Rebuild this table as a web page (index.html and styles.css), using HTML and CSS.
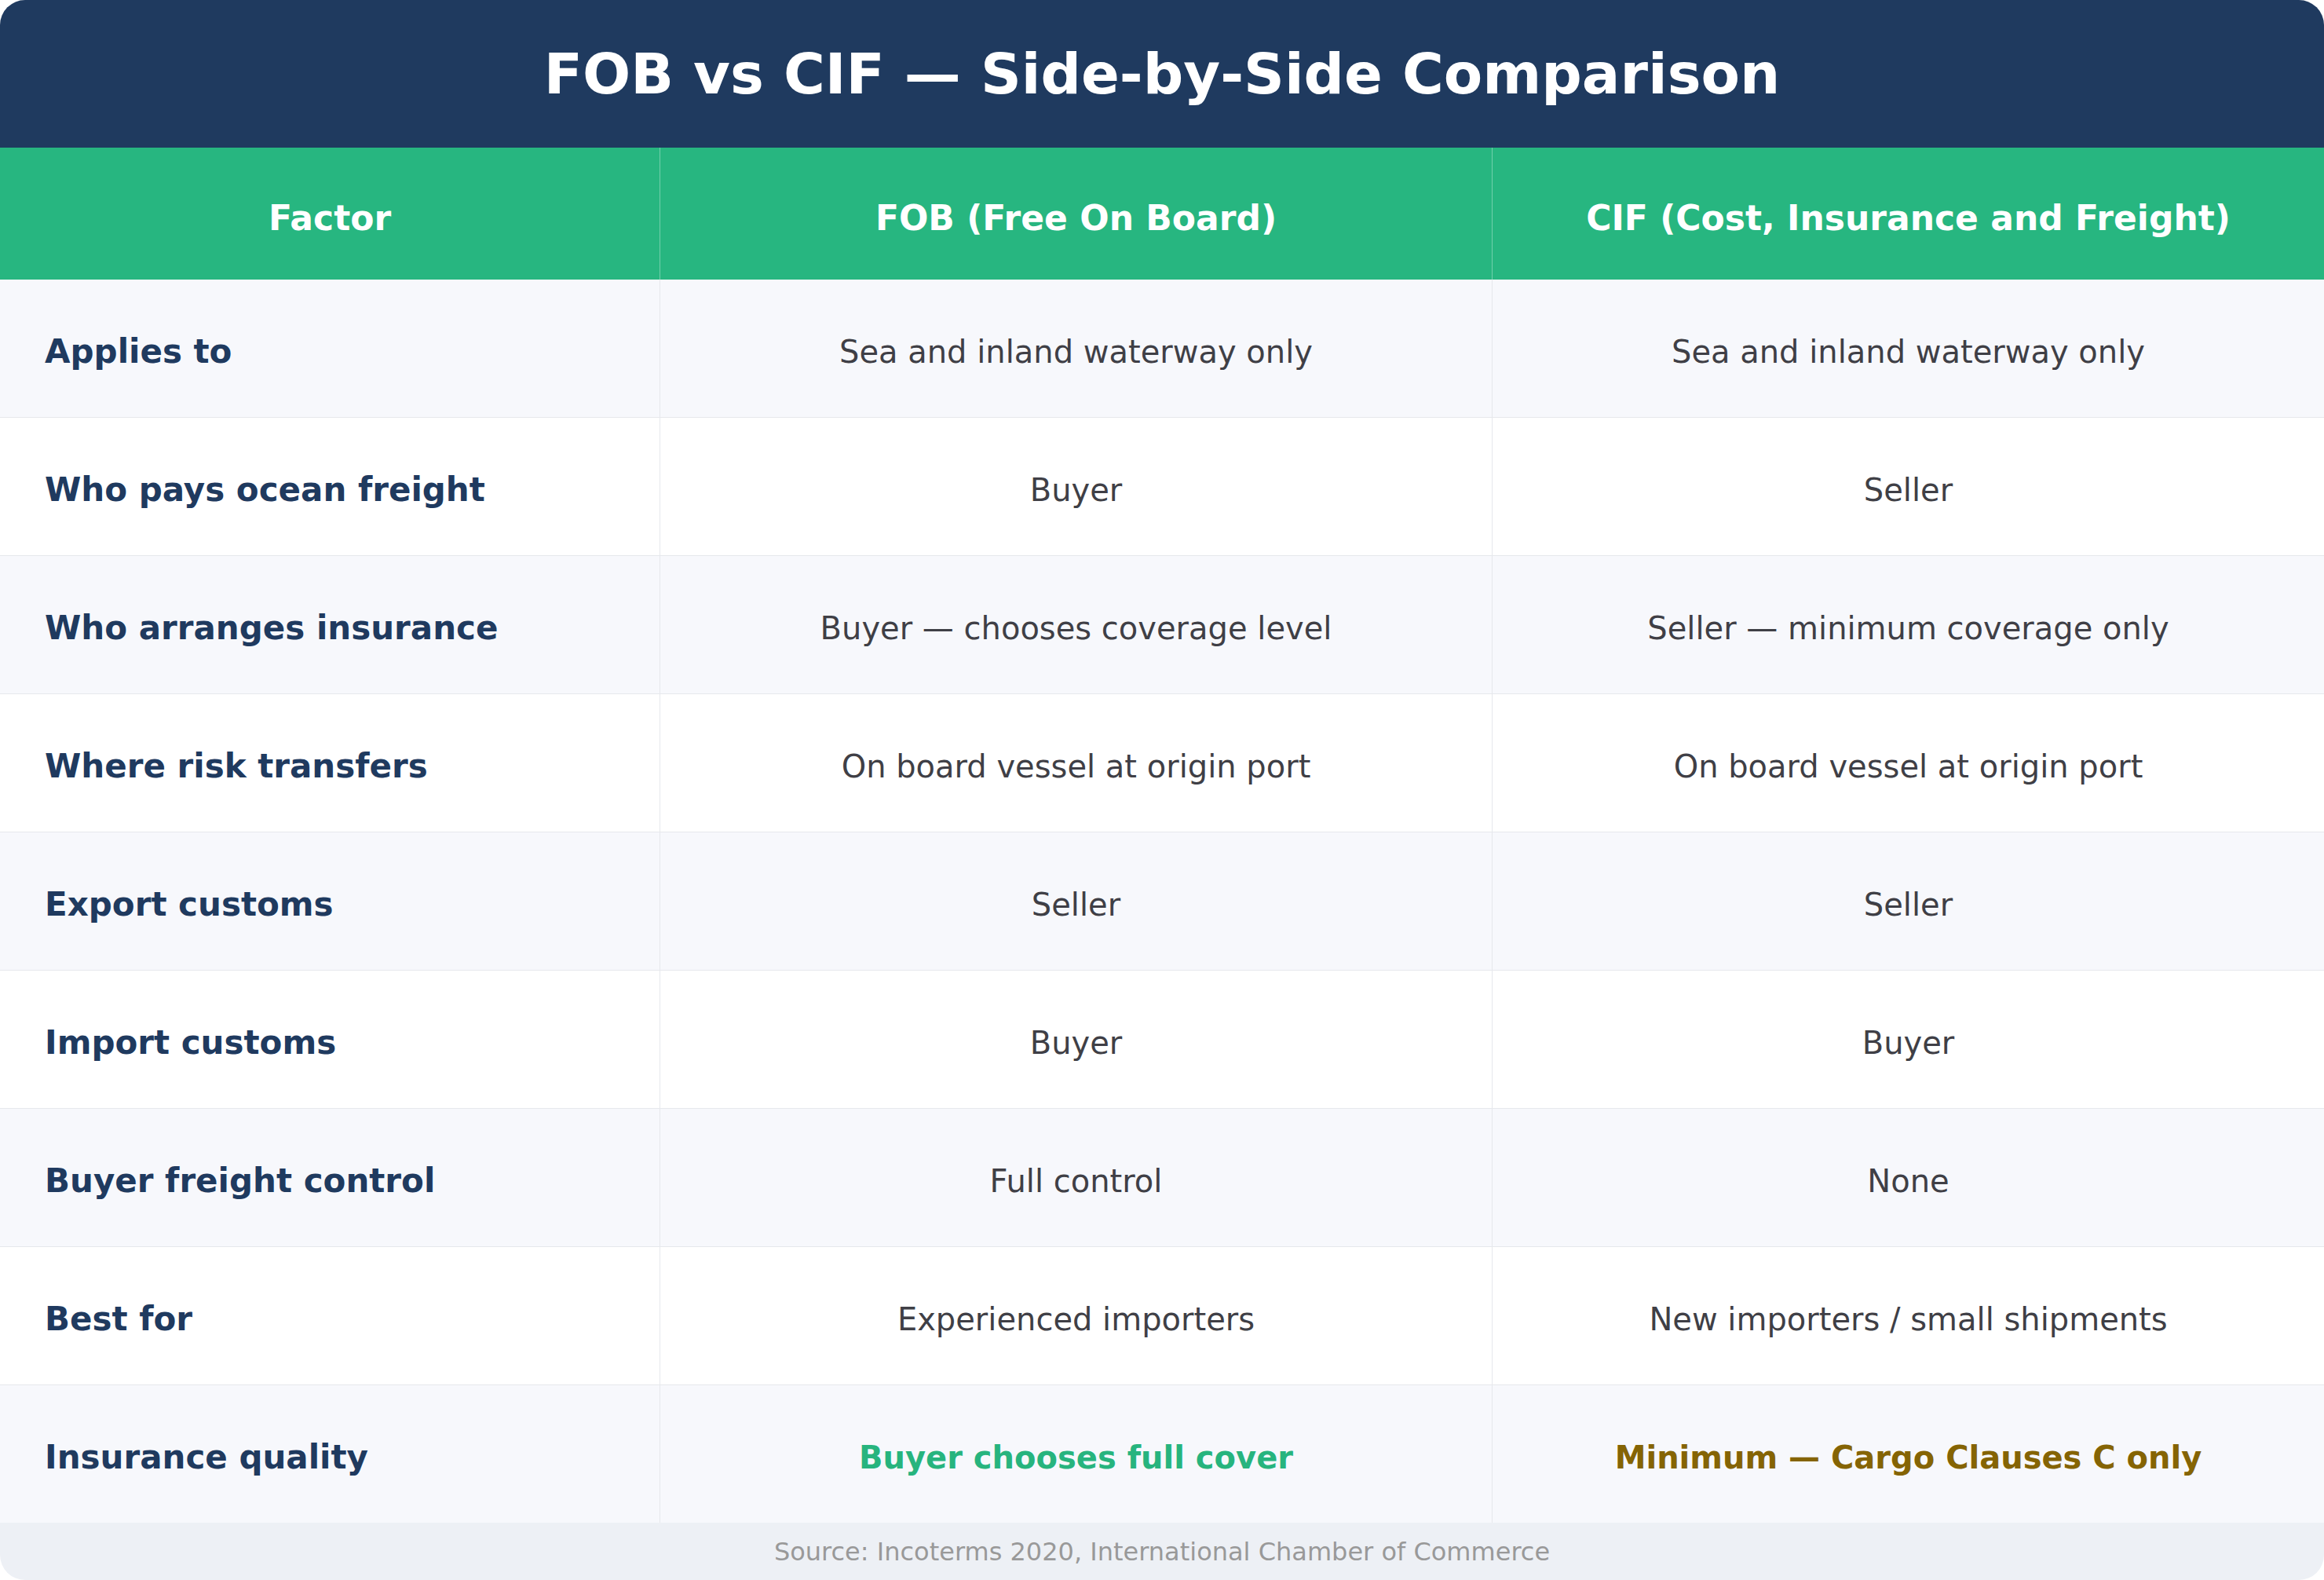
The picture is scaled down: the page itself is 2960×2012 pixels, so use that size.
FILE: index.html
```html
<!DOCTYPE html>
<html lang="en">
<head>
<meta charset="utf-8">
<title>FOB vs CIF — Side-by-Side Comparison</title>
<link rel="stylesheet" href="styles.css">
</head>
<body>
<div class="card">
  <div class="title">FOB vs CIF — Side-by-Side Comparison</div>
  <div class="table">
    <div class="row head">
      <div class="cell">Factor</div>
      <div class="cell">FOB (Free On Board)</div>
      <div class="cell">CIF (Cost, Insurance and Freight)</div>
    </div>
    <div class="row alt">
      <div class="cell label">Applies to</div>
      <div class="cell">Sea and inland waterway only</div>
      <div class="cell">Sea and inland waterway only</div>
    </div>
    <div class="row">
      <div class="cell label">Who pays ocean freight</div>
      <div class="cell">Buyer</div>
      <div class="cell">Seller</div>
    </div>
    <div class="row alt">
      <div class="cell label">Who arranges insurance</div>
      <div class="cell">Buyer — chooses coverage level</div>
      <div class="cell">Seller — minimum coverage only</div>
    </div>
    <div class="row">
      <div class="cell label">Where risk transfers</div>
      <div class="cell">On board vessel at origin port</div>
      <div class="cell">On board vessel at origin port</div>
    </div>
    <div class="row alt">
      <div class="cell label">Export customs</div>
      <div class="cell">Seller</div>
      <div class="cell">Seller</div>
    </div>
    <div class="row">
      <div class="cell label">Import customs</div>
      <div class="cell">Buyer</div>
      <div class="cell">Buyer</div>
    </div>
    <div class="row alt">
      <div class="cell label">Buyer freight control</div>
      <div class="cell">Full control</div>
      <div class="cell">None</div>
    </div>
    <div class="row">
      <div class="cell label">Best for</div>
      <div class="cell">Experienced importers</div>
      <div class="cell">New importers / small shipments</div>
    </div>
    <div class="row alt last">
      <div class="cell label">Insurance quality</div>
      <div class="cell good">Buyer chooses full cover</div>
      <div class="cell warn">Minimum — Cargo Clauses C only</div>
    </div>
  </div>
  <div class="source">Source: Incoterms 2020, International Chamber of Commerce</div>
</div>
</body>
</html>
```
FILE: styles.css
```css
* { box-sizing: border-box; }
html, body { margin: 0; padding: 0; background: #ffffff; }
body { font-family: "DejaVu Sans", Verdana, sans-serif; }

.card {
  width: 2960px;
  height: 2012px;
  border-radius: 32px;
  overflow: hidden;
  display: flex;
  flex-direction: column;
  background: #ffffff;
}

.title {
  height: 188px;
  background: #1f3a5f;
  color: #ffffff;
  font-size: 72px;
  font-weight: bold;
  display: flex;
  align-items: center;
  justify-content: center;
}

.table { display: flex; flex-direction: column; }

.row {
  display: grid;
  grid-template-columns: 840px 1060px 1060px;
  height: 176px;
  border-bottom: 1px solid #e6e8ec;
  background: #ffffff;
}
.row.alt { background: #f7f8fc; }
.row.last { border-bottom: none; height: 175px; }

.cell {
  display: flex;
  align-items: center;
  justify-content: center;
  padding-top: 8px;
  font-size: 40px;
  color: #3f3f46;
  border-left: 1px solid #e6e8ec;
}
.cell:first-child { border-left: none; }

.cell.label {
  justify-content: flex-start;
  padding-left: 57px;
  font-size: 42px;
  font-weight: bold;
  color: #1f3a5f;
}

.row.head {
  height: 168px;
  background: #27b680;
  border-bottom: none;
}
.row.head .cell {
  padding-top: 10px;
  color: #ffffff;
  font-weight: bold;
  font-size: 44px;
  border-left-color: rgba(255, 255, 255, 0.35);
}

.cell.good { color: #27b47e; font-weight: bold; }
.cell.warn { color: #856404; font-weight: bold; }

.source {
  flex: 1;
  background: #edf0f5;
  color: #999999;
  font-size: 32px;
  display: flex;
  align-items: center;
  justify-content: center;
}
```
